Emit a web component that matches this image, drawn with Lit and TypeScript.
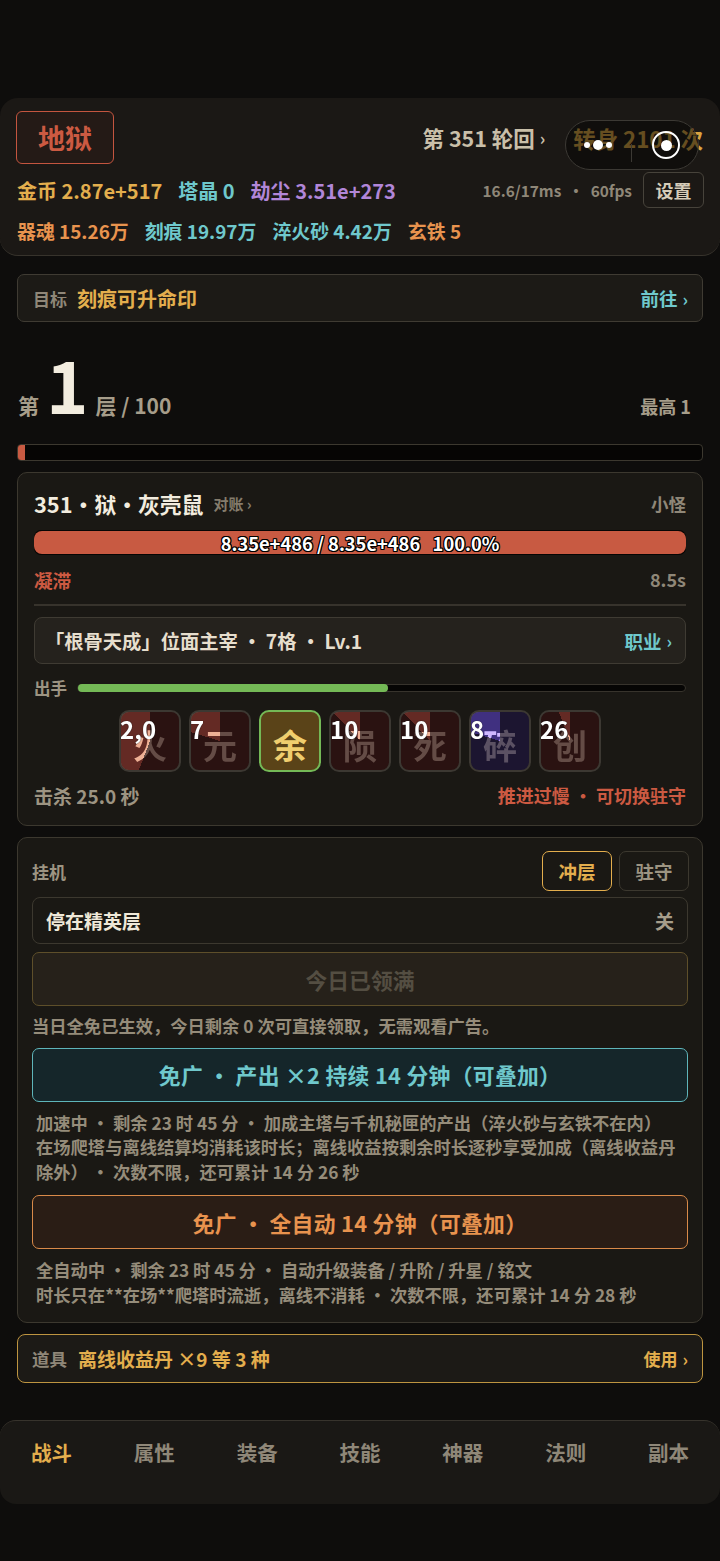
import { LitElement, html, css } from "lit";
import { customElement } from "lit/decorators.js";

const skills = [
  { n: "2,0", g: "火", a: 201, v: false },
  { n: "7", g: "元", a: 287, v: false },
  { n: "", g: "余", a: 360, v: false, on: true },
  { n: "10", g: "陨", a: 317, v: false },
  { n: "10", g: "死", a: 317, v: false },
  { n: "8", g: "碎", a: 287, v: true },
  { n: "26", g: "创", a: 339, v: false },
];

@customElement("app-root")
export class AppRoot extends LitElement {
  static styles = css`
    :host {
      display: block;
      width: 720px;
      height: 1561px;
      overflow: hidden;
      position: relative;
      background: #0e0d0c;
      color: #f2ecdf;
      font-family: "Noto Sans CJK SC", "Noto Sans", sans-serif;
      font-weight: 700;
    }
    .page { display: flex; flex-direction: column; padding-top: 98px; }
    .top {
      height: 158px;
      box-sizing: border-box;
      background: #1b1815;
      border-radius: 18px;
      border-bottom: 1px solid #37332c;
      padding: 13px 16px 0 16px;
      display: flex;
      flex-direction: column;
    }
    .r1 { display: flex; justify-content: space-between; align-items: center; height: 53px; }
    .diff {
      width: 98px; height: 53px; box-sizing: border-box;
      border: 1.5px solid #c4553f; border-radius: 6px;
      color: #cc5a42; font-size: 27px; font-weight: 700;
      display: flex; align-items: center; justify-content: center;
      background: #241a16;
    }
    .r1r { display: flex; align-items: center; gap: 28px; margin-right: 1px; }
    .round { font-size: 21.5px; color: #c9bfa9; display: flex; align-items: center; gap: 5px; }
    .chev { font-size: 17px; font-weight: 700; }
    .turn { font-size: 22.3px; color: #d9a441; }
    .r2 { display: flex; align-items: center; margin-top: 8px; height: 36px; margin-left: 1px; font-size: 20px; }
    .gold { color: #e3ae4d; }
    .cyan { color: #6fc8cc; }
    .vio { color: #b186d8; }
    .org { color: #e8934e; }
    .r2 span.item { margin-right: 16px; }
    .fps { margin-left: auto; font-size: 15.4px; color: #8f8778; margin-right: 11px; white-space: pre; }
    .set {
      width: 61px; height: 36px; box-sizing: border-box;
      border: 1px solid #47433b; border-radius: 6px; color: #d5ccb9; font-size: 18px;
      display: flex; align-items: center; justify-content: center;
    }
    .r3 { display: flex; gap: 16px; margin-top: 9px; margin-left: 1px; font-size: 18.9px; }
    .goal {
      margin: 18px 17px 0; height: 48px; box-sizing: border-box;
      border: 1px solid #3f3b33; border-radius: 7px; background: #1c1a16;
      display: flex; align-items: center; padding: 0 14px 0 15px; font-size: 20px;
    }
    .lab { color: #8f8778; font-size: 17px; margin-right: 10px; }
    .ml { margin-left: auto; display: flex; align-items: center; gap: 5px; font-size: 18.5px; }
    .floor {
      margin: 24px 29px 0 18px; height: 74px; display: flex; align-items: flex-end;
      color: #a69d8a; font-size: 21px;
    }
    .floor .num { font-size: 72px; line-height: 72px; color: #f2ecdf; font-weight: 700; margin: -1px 7px 1px 7px; height: 72px; }
    .floor .t { line-height: 30px; }
    .floor .max { margin-left: auto; font-size: 18px; line-height: 28px; }
    .fbar {
      margin: 24px 17px 0; height: 17px; box-sizing: border-box;
      border: 1px solid #3c382f; border-radius: 4px; background: #060504; overflow: hidden;
    }
    .fbar i { display: block; width: 7px; height: 100%; background: #c85a42; }
    .card {
      margin: 11px 17px 0; box-sizing: border-box;
      border: 1px solid #3c382f; border-radius: 10px; background: #1a1814;
    }
    .battle { height: 354px; padding: 13px 16px 0; display: flex; flex-direction: column; }
    .b1 { display: flex; align-items: center; height: 34px; font-size: 21.8px; }
    .b1 .rec { font-size: 15px; color: #857c6c; margin-left: 10px; }
    .b1 .kind { margin-left: auto; font-size: 17.5px; color: #8f8778; }
    .hp {
      position: relative; margin-top: 10px; height: 25px; background: #060504; border-radius: 7px;
      display: flex; align-items: center; justify-content: center; overflow: hidden;
    }
    .hp i { position: absolute; inset: 1px 0; background: #c85a42; border-radius: 8px; }
    .hp span {
      position: relative; font-size: 18.3px; color: #fff; white-space: pre;
      text-shadow: -1px 0 #000, 1px 0 #000, 0 -1px #000, 0 1px #000, -1px -1px #000, 1px 1px #000, -1px 1px #000, 1px -1px #000;
    }
    .b3 { display: flex; justify-content: space-between; align-items: center; height: 26px; margin-top: 11px; font-size: 18.6px; color: #cc5a42; }
    .b3 .s { color: #8f8778; font-size: 18px; }
    .hr { height: 2px; background: #37332c; margin-top: 12px; }
    .cls {
      margin-top: 11px; height: 47px; box-sizing: border-box; border: 1px solid #3f3b33; border-radius: 8px;
      background: #25221d; display: flex; align-items: center; padding: 0 13px 0 10px; font-size: 19.3px; color: #e6decd;
    }
    .act { display: flex; align-items: center; gap: 10px; margin-top: 11px; height: 26px; font-size: 16.5px; color: #9d9482; }
    .abar { flex: 1; height: 8px; box-sizing: border-box; background: #060504; border: 1px solid #37332c; border-radius: 4px; position: relative; }
    .abar i { position: absolute; left: 0; top: -1px; bottom: -1px; width: 310px; background: #74b956; border-radius: 4px; }
    .skills { display: flex; justify-content: center; gap: 8px; margin-top: 9px; }
    .sk {
      width: 62px; height: 62px; box-sizing: border-box; position: relative; isolation: isolate;
      border: 2px solid #3c3832; border-radius: 10px; background: #2a1211;
      display: flex; align-items: center; justify-content: center;
      font-size: 34px; color: #644c46;
    }
    .sk.v { background: #1c1530; color: #5b5163; }
    .sk.on { background: #5a4318; border-color: #74b956; color: #efce6e; }
    .sk .g { position: relative; top: 4px; line-height: 1; }
    .sk .w { position: absolute; inset: 0; border-radius: 8px; mix-blend-mode: color-dodge; }
    .sk .n {
      position: absolute; left: -1px; top: 1px; font-size: 24px; line-height: 32px; color: #fff; white-space: nowrap;
      text-shadow: 0 0 1px #000;
    }
    .b5 { display: flex; justify-content: space-between; align-items: center; margin-top: 9px; height: 28px; font-size: 19px; color: #9d9482; }
    .b5 .w2 { color: #cc5a42; font-size: 18px; }
    .idle { height: 486px; padding: 13px 14px 0; display: flex; flex-direction: column; }
    .i1 { display: flex; align-items: center; height: 40px; font-size: 17px; color: #9d9482; }
    .tabs { margin-left: auto; display: flex; gap: 7px; margin-right: -1px; }
    .tab {
      width: 70px; height: 40px; box-sizing: border-box; border: 1px solid #3c382f; border-radius: 7px;
      display: flex; align-items: center; justify-content: center; font-size: 18.5px; color: #9d9482;
    }
    .tab.on { border: 1.5px solid #e3ae4d; color: #e3ae4d; }
    .stop {
      margin-top: 6px; height: 47px; box-sizing: border-box; border: 1px solid #3c382f; border-radius: 8px;
      display: flex; justify-content: space-between; align-items: center; padding: 0 13px; font-size: 19px; color: #efe8d8;
    }
    .stop .s { color: #a69d8a; }
    .btn {
      height: 54px; box-sizing: border-box; border-radius: 7px; display: flex; align-items: center; justify-content: center;
      font-size: 21.8px; white-space: pre;
    }
    .b-dis { margin-top: 8px; border: 1.5px solid #5e4f2a; background: #26211a; color: #544e42; }
    .note { font-size: 17.3px; color: #958c7a; line-height: 24.5px; }
    .n1 { margin-top: 8px; }
    .b-cy { margin-top: 9px; border: 1.5px solid #5eb5ba; background: #15262a; color: #6fc8cc; letter-spacing: 0.3px; }
    .b-or { margin-top: 11px; border: 1.5px solid #d98a49; background: #2a1d15; color: #e8934e; letter-spacing: 0.3px; }
    .nt { margin-top: 9px; padding: 0 4px; }
    .prop {
      margin: 11px 17px 0; height: 49px; box-sizing: border-box; border: 1.5px solid #bd9440; border-radius: 8px;
      background: #1c1a16; display: flex; align-items: center; padding: 0 14px; font-size: 19px; color: #e3ae4d;
    }
    .prop .lab { font-size: 17.5px; margin-right: 11px; }
    .prop .ml { font-size: 17px; }
    nav {
      margin-top: 37px; height: 84px; box-sizing: border-box; background: #1a1815;
      border-top: 1px solid #37332c; border-radius: 16px;
      display: flex; justify-content: space-between; padding: 0 31px 22px; align-items: center;
      font-size: 20.5px; color: #8f8778;
    }
    nav .on { color: #e3ae4d; }
    .capsule {
      position: absolute; left: 565px; top: 120px; width: 134px; height: 50px; box-sizing: border-box;
      border: 1.5px solid #3c3934; border-radius: 25px; background: rgba(8, 7, 6, 0.55);
    }
    .dot { position: absolute; background: #fff; border-radius: 50%; }
    .d1 { left: 18px; top: 21px; width: 6px; height: 6px; }
    .d2 { left: 27px; top: 19px; width: 10px; height: 10px; }
    .d3 { left: 40px; top: 21px; width: 6px; height: 6px; }
    .sep { position: absolute; left: 65px; top: 23px; width: 1px; height: 18px; background: #3c3934; }
    .ring { position: absolute; left: 86px; top: 10px; width: 28px; height: 28px; box-sizing: border-box; border: 2.5px solid #fff; border-radius: 50%; }
    .d4 { left: 94.5px; top: 18.5px; width: 11px; height: 11px; }
  `;

  private wedge(s: { a: number; v: boolean }) {
    if (s.a >= 360) return null;
    const c = s.v ? "#8f8f9f" : "#949187";
    return html`<div
      class="w"
      style="background:conic-gradient(transparent ${s.a}deg, ${c} ${s.a}deg)"
    ></div>`;
  }

  render() {
    return html`
      <div class="page">
        <section class="top">
          <div class="r1">
            <div class="diff">地狱</div>
            <div class="r1r">
              <div class="round">第 351 轮回 <span class="chev">›</span></div>
              <div class="turn">转身 2101 次</div>
            </div>
          </div>
          <div class="r2">
            <span class="item gold">金币 2.87e+517</span>
            <span class="item cyan">塔晶 0</span>
            <span class="item vio">劫尘 3.51e+273</span>
            <span class="fps">16.6/17ms  •  60fps</span>
            <div class="set">设置</div>
          </div>
          <div class="r3">
            <span class="org">器魂 15.26万</span>
            <span class="cyan">刻痕 19.97万</span>
            <span class="cyan">淬火砂 4.42万</span>
            <span class="org">玄铁 5</span>
          </div>
        </section>

        <div class="goal">
          <span class="lab">目标</span><span class="gold">刻痕可升命印</span>
          <span class="ml cyan">前往 <span class="chev">›</span></span>
        </div>

        <div class="floor">
          <span class="t">第</span><span class="num">1</span><span class="t">层 / 100</span>
          <span class="max">最高 1</span>
        </div>
        <div class="fbar"><i></i></div>

        <section class="card battle">
          <div class="b1">
            <span>351·狱·灰壳鼠</span><span class="rec">对账 ›</span>
            <span class="kind">小怪</span>
          </div>
          <div class="hp"><i></i><span>8.35e+486 / 8.35e+486   100.0%</span></div>
          <div class="b3"><span>凝滞</span><span class="s">8.5s</span></div>
          <div class="hr"></div>
          <div class="cls">
            <span>「根骨天成」位面主宰 • 7格 • Lv.1</span>
            <span class="ml cyan">职业 <span class="chev">›</span></span>
          </div>
          <div class="act"><span>出手</span><div class="abar"><i></i></div></div>
          <div class="skills">
            ${skills.map(
              (s) => html`<div class="sk ${s.v ? "v" : ""} ${s.on ? "on" : ""}">
                <span class="g">${s.g}</span>${this.wedge(s)}
                ${s.n ? html`<span class="n">${s.n}</span>` : null}
              </div>`
            )}
          </div>
          <div class="b5"><span>击杀 25.0 秒</span><span class="w2">推进过慢 • 可切换驻守</span></div>
        </section>

        <section class="card idle">
          <div class="i1">
            <span>挂机</span>
            <div class="tabs"><div class="tab on">冲层</div><div class="tab">驻守</div></div>
          </div>
          <div class="stop"><span>停在精英层</span><span class="s">关</span></div>
          <div class="btn b-dis">今日已领满</div>
          <div class="note n1">当日全免已生效，今日剩余 0 次可直接领取，无需观看广告。</div>
          <div class="btn b-cy">免广 • 产出 ×2 持续 14 分钟（可叠加）</div>
          <div class="note nt">
            加速中 • 剩余 23 时 45 分 • 加成主塔与千机秘匣的产出（淬火砂与玄铁不在内）<br />
            在场爬塔与离线结算均消耗该时长；离线收益按剩余时长逐秒享受加成（离线收益丹除外） • 次数不限，还可累计 14 分 26 秒
          </div>
          <div class="btn b-or">免广 • 全自动 14 分钟（可叠加）</div>
          <div class="note nt">
            全自动中 • 剩余 23 时 45 分 • 自动升级装备 / 升阶 / 升星 / 铭文<br />
            时长只在**在场**爬塔时流逝，离线不消耗 • 次数不限，还可累计 14 分 28 秒
          </div>
        </section>

        <div class="prop">
          <span class="lab">道具</span><span>离线收益丹 ×9 等 3 种</span>
          <span class="ml">使用 <span class="chev">›</span></span>
        </div>

        <nav>
          <span class="on">战斗</span><span>属性</span><span>装备</span><span>技能</span><span>神器</span><span>法则</span><span>副本</span>
        </nav>
      </div>
      <div class="capsule">
        <i class="dot d1"></i><i class="dot d2"></i><i class="dot d3"></i>
        <i class="sep"></i>
        <i class="ring"></i><i class="dot d4"></i>
      </div>
    `;
  }
}
